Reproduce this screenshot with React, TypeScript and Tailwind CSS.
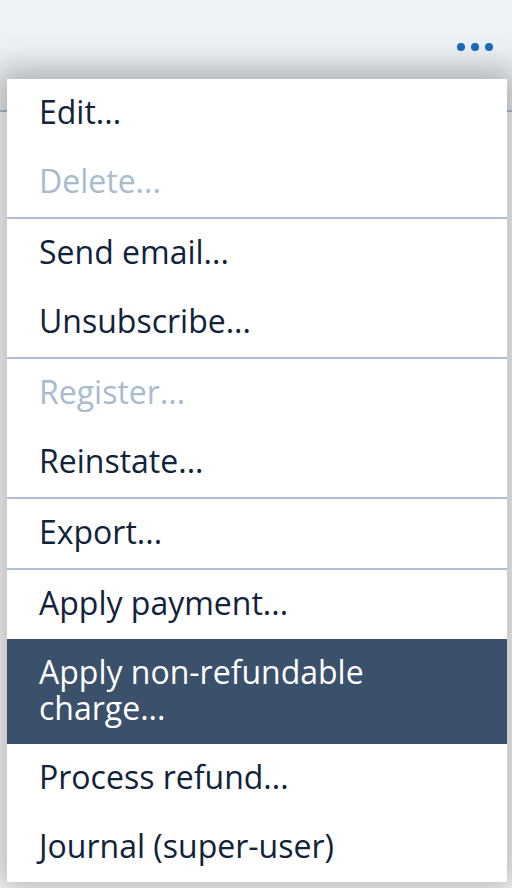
import React from "react";

type Item = { label: string; disabled?: boolean; active?: boolean };

const groups: Item[][] = [
  [{ label: "Edit..." }, { label: "Delete...", disabled: true }],
  [{ label: "Send email..." }, { label: "Unsubscribe..." }],
  [{ label: "Register...", disabled: true }, { label: "Reinstate..." }],
  [{ label: "Export..." }],
  [
    { label: "Apply payment..." },
    { label: "Apply non-refundable charge...", active: true },
    { label: "Process refund..." },
    { label: "Journal (super-user)" },
  ],
];

export default function App() {
  return (
    <div
      className="relative w-[512px] h-[888px] overflow-hidden bg-white"
      style={{ fontFamily: '"Open Sans", "Noto Sans", sans-serif' }}
    >
      <div className="h-[112px] bg-[#edf2f7] border-b-2 border-[#aebfd2] flex justify-end items-start pt-[43px] pr-[19px]">
        <div className="flex gap-[6px]">
          <span className="w-[8px] h-[8px] rounded-full bg-[#1d6bbd]" />
          <span className="w-[8px] h-[8px] rounded-full bg-[#1d6bbd]" />
          <span className="w-[8px] h-[8px] rounded-full bg-[#1d6bbd]" />
        </div>
      </div>

      <div className="absolute left-[7px] top-[79px] w-[500px] bg-white shadow-[0_0_30px_10px_rgba(0,0,0,0.28)] flex flex-col">
        {groups.map((g, gi) => (
          <div
            key={gi}
            className={gi > 0 ? "border-t-2 border-[#b0c0d3] flex flex-col" : "flex flex-col"}
          >
            {g.map((it) => (
              <div
                key={it.label}
                className={
                  "pl-[32px] pr-[100px] pt-[15px] pb-[18px] text-[32px] leading-[36px] " +
                  (it.active
                    ? "bg-[#3a506b] text-white"
                    : it.disabled
                    ? "text-[#a8bbcf]"
                    : "text-[#11233a]")
                }
              >
                {it.label}
              </div>
            ))}
          </div>
        ))}
      </div>
    </div>
  );
}
